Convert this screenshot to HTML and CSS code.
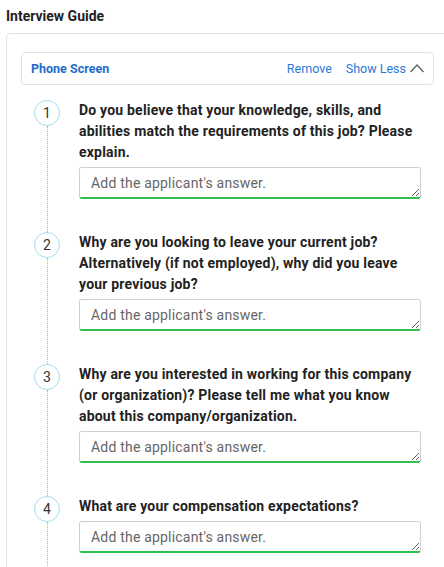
FILE: index.html
```html
<!DOCTYPE html>
<html lang="en">
<head>
<meta charset="utf-8">
<title>Interview Guide</title>
<link rel="stylesheet" href="styles.css">
</head>
<body>
<div class="page">
  <h2 class="title">Interview Guide</h2>
  <div class="card">
    <div class="guide-header">
      <span class="guide-name">Phone Screen</span>
      <div class="guide-actions">
        <a class="link">Remove</a>
        <a class="link toggle">Show Less
          <svg class="chev" width="16" height="10" viewBox="0 0 16 10"><polyline points="1.5,9 8,2 14.5,9" fill="none" stroke="#5f6368" stroke-width="1.4"/></svg>
        </a>
      </div>
    </div>
    <ol class="questions">
      <li class="q">
        <div class="rail"><span class="num">1</span><span class="line"></span></div>
        <div class="q-body">
          <p class="q-text">Do you believe that your knowledge, skills, and abilities match the requirements of this job? Please explain.</p>
          <textarea class="answer" placeholder="Add the applicant's answer."></textarea>
        </div>
      </li>
      <li class="q">
        <div class="rail"><span class="num">2</span><span class="line"></span></div>
        <div class="q-body">
          <p class="q-text">Why are you looking to leave your current job? Alternatively (if not employed), why did you leave your previous job?</p>
          <textarea class="answer" placeholder="Add the applicant's answer."></textarea>
        </div>
      </li>
      <li class="q">
        <div class="rail"><span class="num">3</span><span class="line"></span></div>
        <div class="q-body">
          <p class="q-text">Why are you interested in working for this company (or organization)? Please tell me what you know about this company/organization.</p>
          <textarea class="answer" placeholder="Add the applicant's answer."></textarea>
        </div>
      </li>
      <li class="q">
        <div class="rail"><span class="num">4</span><span class="line"></span></div>
        <div class="q-body">
          <p class="q-text">What are your compensation expectations?</p>
          <textarea class="answer" placeholder="Add the applicant's answer."></textarea>
        </div>
      </li>
    </ol>
  </div>
</div>
</body>
</html>
```
FILE: styles.css
```css
html, body {
  margin: 0;
  padding: 0;
  overflow: hidden;
  background: #fff;
}
body {
  font-family: Roboto, "Liberation Sans", Arial, sans-serif;
  color: #222;
}
.page {
  padding: 6px 0 0 6px;
}
.title {
  margin: 0 0 7px 0;
  font-size: 14px;
  line-height: 20px;
  font-weight: 700;
  color: #222;
}
.card {
  width: 443px;
  box-sizing: border-box;
  border: 1px solid #e3e3e3;
  border-radius: 4px 0 0 0;
  padding: 18px 14px 0 14px;
}
.guide-header {
  height: 33px;
  box-sizing: border-box;
  border: 1px solid #e2e2e2;
  border-radius: 4px;
  display: flex;
  align-items: center;
  justify-content: space-between;
  padding: 0 8px 0 9px;
}
.guide-name {
  font-size: 12.5px;
  font-weight: 700;
  color: #1e6ccc;
}
.guide-actions {
  display: flex;
  align-items: center;
  gap: 14px;
}
.link {
  font-size: 12.5px;
  color: #2b78d6;
  cursor: pointer;
}
.toggle {
  display: flex;
  align-items: center;
  gap: 3px;
}
.chev {
  display: block;
  margin-top: -1px;
}
.questions {
  list-style: none;
  margin: 15px 0 0 0;
  padding: 0;
}
.q {
  display: flex;
  padding: 0 13px 0 13px;
}
.rail {
  width: 26px;
  flex: none;
  display: flex;
  flex-direction: column;
  align-items: center;
}
.num {
  width: 26px;
  height: 26px;
  box-sizing: border-box;
  border: 1px solid #a6dcf3;
  border-radius: 50%;
  display: flex;
  align-items: center;
  justify-content: center;
  font-size: 14px;
  color: #333;
  flex: none;
}
.line {
  flex: 1;
  width: 0;
  border-left: 1px dotted #b5b5b5;
  margin-left: 1px;
}
.q-body {
  flex: 1;
  min-width: 0;
  margin-left: 19px;
  padding-bottom: 33px;
}
.q-text {
  margin: 0;
  font-size: 14px;
  line-height: 21px;
  font-weight: 700;
  letter-spacing: 0.2px;
  color: #222;
}
.answer {
  display: block;
  width: 100%;
  height: 32px;
  box-sizing: border-box;
  margin-top: 4px;
  border: 1px solid #cfcfcf;
  border-bottom: 2px solid #2fbf4f;
  border-radius: 3px;
  padding: 5px 11px;
  font-family: Roboto, "Liberation Sans", Arial, sans-serif;
  font-size: 14px;
  line-height: 20px;
  letter-spacing: 0.2px;
  color: #333;
  background: #fff;
  outline: none;
}
.answer::placeholder {
  color: #666;
}
```
